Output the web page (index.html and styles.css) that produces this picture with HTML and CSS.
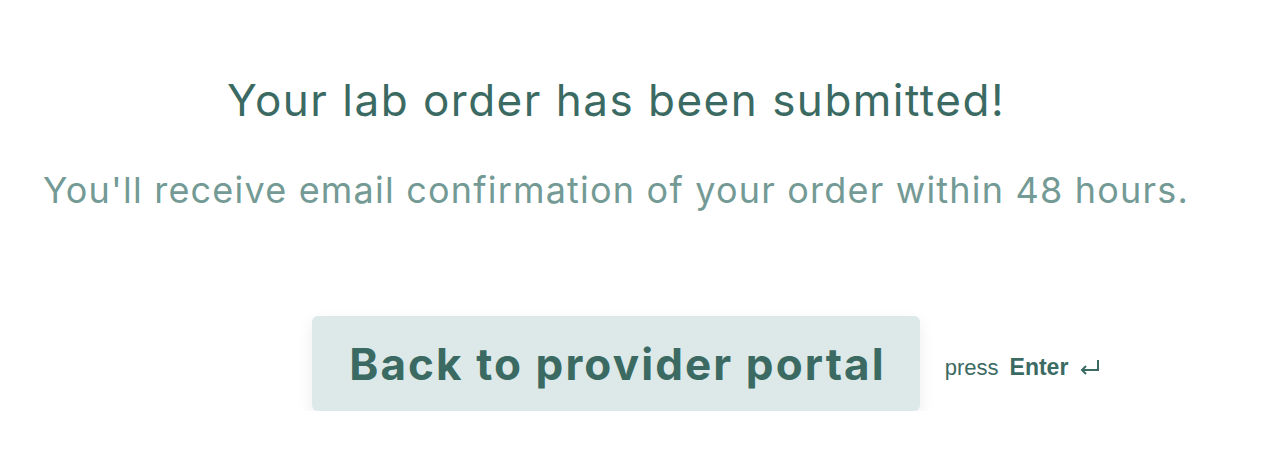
FILE: index.html
```html
<!DOCTYPE html>
<html lang="en">
<head>
    <meta charset="UTF-8">
    <meta name="viewport" content="width=device-width, initial-scale=1.0">
    <title>Order submitted</title>
    <link rel="stylesheet" href="styles.css">
</head>
<body>
    <div class="page">
        <h1 class="title">Your lab order has been submitted!</h1>
        <p class="subtitle">You'll receive email confirmation of your order within 48 hours.</p>
        <div class="actions">
            <span></span>
            <button class="back-btn" type="button">Back to provider portal</button>
            <span class="hint">
                press <b>Enter</b>
                <svg class="enter-icon" width="21" height="17" viewBox="0 0 21 17" fill="none" stroke="#3b6a63" stroke-width="2">
                    <path d="M19 1v10H3"/>
                    <path d="M7 7l-4 4 4 4"/>
                </svg>
            </span>
        </div>
    </div>
</body>
</html>
```

FILE: styles.css
```css
* {
    padding: 0;
    margin: 0;
    box-sizing: border-box;
}

body {
    font-family: "Inter", "Noto Sans", sans-serif;
    background: #fff;
}

.page {
    width: 1232px;
    padding-top: 72px;
    text-align: center;
}

.title {
    font-size: 44px;
    font-weight: 400;
    letter-spacing: 1.5px;
    color: #3b6a63;
    line-height: 56px;
}

.subtitle {
    margin-top: 42px;
    font-size: 36px;
    letter-spacing: 1.2px;
    color: #739a94;
    line-height: 40px;
}

.actions {
    margin-top: 106px;
    display: grid;
    grid-template-columns: 1fr auto 1fr;
    align-items: center;
}

.back-btn {
    font-family: inherit;
    font-size: 44px;
    font-weight: 700;
    letter-spacing: 2.1px;
    color: #3b6a63;
    background: #dde9e8;
    border: none;
    border-radius: 6px;
    height: 95px;
    padding: 0 34px 0 37px;
    box-shadow: 0 6px 16px rgba(0, 0, 0, 0.08);
}

.hint {
    justify-self: start;
    margin-left: 25px;
    margin-top: 8px;
    display: flex;
    align-items: center;
    gap: 11px;
    font-family: "Liberation Sans", Arial, sans-serif;
    font-size: 22px;
    color: #3b6a63;
}

.hint b {
    font-size: 23px;
}
```
